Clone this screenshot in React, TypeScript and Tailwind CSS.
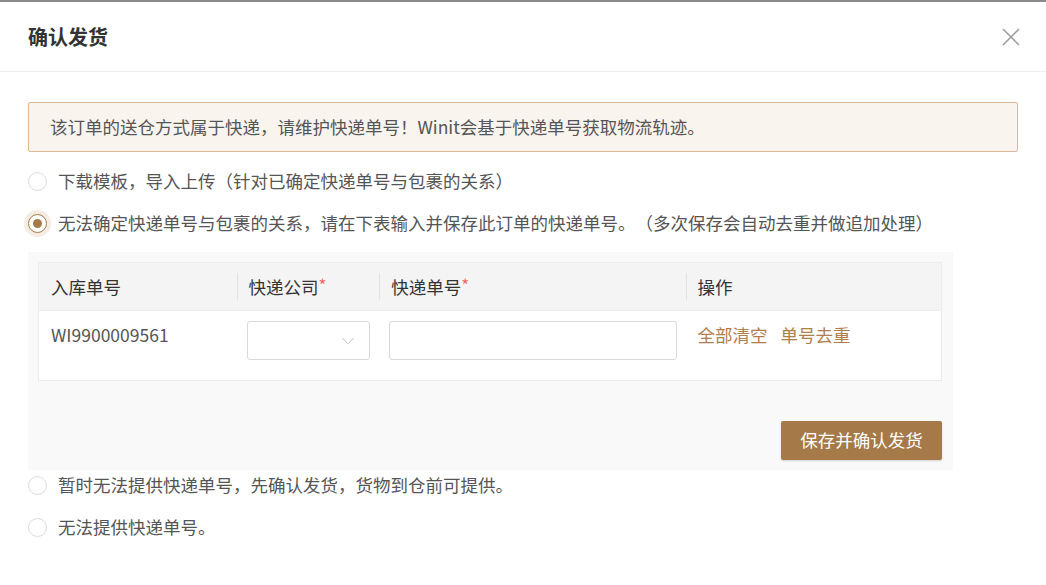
import { ChevronDown } from "lucide-react";

const font = { fontFamily: '"Noto Sans CJK SC", "Noto Sans", sans-serif' };

function Radio({ checked = false }: { checked?: boolean }) {
  if (checked) {
    return (
      <span className="shrink-0 w-[19px] h-[19px] rounded-full border border-[#a67a48] bg-white flex items-center justify-center shadow-[0_0_0_4px_#f5ede4]">
        <span className="w-[9px] h-[9px] rounded-full bg-[#a67a48]" />
      </span>
    );
  }
  return <span className="shrink-0 w-[19px] h-[19px] rounded-full border border-[#dcdcdc] bg-white" />;
}

function Option({ label, checked, className }: { label: string; checked?: boolean; className: string }) {
  return (
    <label className={`flex items-center gap-[11px] text-[17.5px] text-[#555] ${className}`}>
      <Radio checked={checked} />
      <span className="leading-[24px]">{label}</span>
    </label>
  );
}

const cols = ["w-[198px]", "w-[143px]", "w-[307px]", "w-[256px]"];

export default function App() {
  return (
    <div className="w-[1046px] h-[585px] bg-white overflow-hidden [text-spacing-trim:space-all]" style={font}>
      <div className="h-[2px] bg-[#8a8a8a]" />

      {/* Header */}
      <div className="h-[70px] flex items-center justify-between pl-[28px] pr-[24px] border-b border-[#ececec]">
        <h1 className="text-[20px] font-bold text-[#333] leading-[28px]">确认发货</h1>
        <svg width="22" height="22" viewBox="0 0 22 22" className="text-[#999]">
          <path d="M3 3 L19 19 M19 3 L3 19" stroke="currentColor" strokeWidth="1.5" />
        </svg>
      </div>

      <div className="px-[28px] pt-[30px]">
        {/* Alert */}
        <div className="h-[50px] flex items-center pl-[21px] bg-[#faf4ef] border border-[#dbb995] rounded-[2px] text-[17.5px] text-[#555]">
          该订单的送仓方式属于快递，请维护快递单号！Winit会基于快递单号获取物流轨迹。
        </div>

        <Option className="mt-[8px] h-[42px]" label="下载模板，导入上传（针对已确定快递单号与包裹的关系）" />
        <Option className="h-[42px]" checked label="无法确定快递单号与包裹的关系，请在下表输入并保存此订单的快递单号。（多次保存会自动去重并做追加处理）" />

        {/* Table panel */}
        <div className="mt-[8px] w-[925px] bg-[#f9f9f9] pt-[10px] pb-[10px] pl-[10px] pr-[11px]">
          <div className="border border-[#ececec] bg-white">
            <div className="h-[47px] flex bg-[#f4f4f4] text-[17.5px] text-[#333]">
              {["入库单号", "快递公司", "快递单号", "操作"].map((h, i) => (
                <div key={h} className={`${cols[i]} relative flex items-center pl-[12px]`}>
                  {i > 0 && <span className="absolute left-0 top-[10px] h-[27px] w-px bg-[#e2e2e2]" />}
                  <span className="leading-[24px]">{h}</span>
                  {(i === 1 || i === 2) && <span className="text-[#f56c6c] text-[17px] leading-[24px] -mt-[4px]">*</span>}
                </div>
              ))}
            </div>
            <div className="h-[70px] flex border-t border-[#ececec] text-[17.5px]">
              <div className={`${cols[0]} pl-[12px] pt-[12px] text-[#555] leading-[24px]`}>WI9900009561</div>
              <div className={`${cols[1]} pl-[10px] pt-[10px]`}>
                <div className="w-[123px] h-[39px] border border-[#d9d9d9] rounded-[3px] bg-white flex items-center justify-end pr-[10px]">
                  <ChevronDown className="w-[22px] h-[22px] text-[#bdbdbd]" strokeWidth={1} />
                </div>
              </div>
              <div className={`${cols[2]} pl-[10px] pt-[10px]`}>
                <div className="w-[288px] h-[39px] border border-[#d9d9d9] rounded-[3px] bg-white" />
              </div>
              <div className={`${cols[3]} pl-[12px] pt-[12px] flex gap-[13px] text-[#b07d4c] leading-[24px]`}>
                <span>全部清空</span>
                <span>单号去重</span>
              </div>
            </div>
          </div>
          <div className="mt-[40px] flex justify-end">
            <button className="h-[39px] w-[161px] rounded-[2px] bg-[#a67a48] text-white text-[17.5px] shadow-[0_1px_2px_rgba(0,0,0,0.15)]">
              保存并确认发货
            </button>
          </div>
        </div>

        <Option className="h-[30px]" label="暂时无法提供快递单号，先确认发货，货物到仓前可提供。" />
        <Option className="mt-[12px] h-[30px]" label="无法提供快递单号。" />
      </div>
    </div>
  );
}
